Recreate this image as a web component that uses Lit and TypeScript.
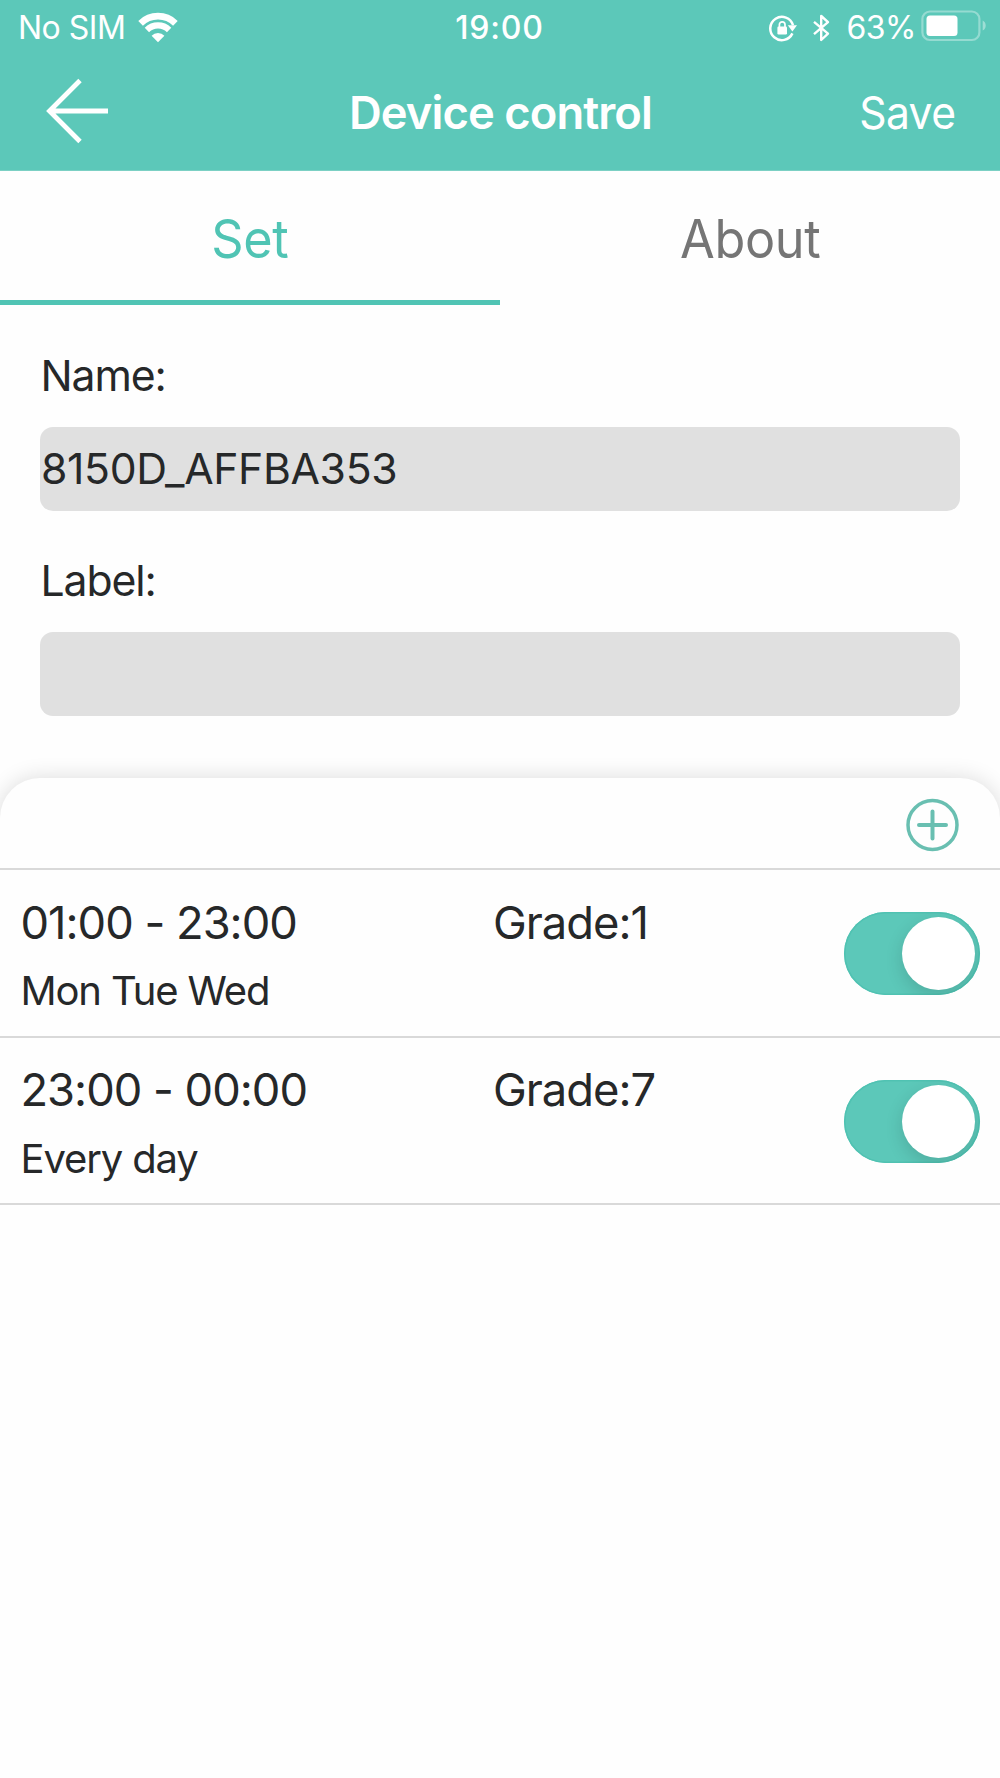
import { LitElement, html, css } from "lit";
import { customElement, property, state } from "lit/decorators.js";
import { classMap } from "lit/directives/class-map.js";

interface Schedule {
  time: string;
  days: string;
  grade: number;
  on: boolean;
}

@customElement("status-bar")
export class StatusBar extends LitElement {
  static styles = css`
    :host {
      display: grid;
      grid-template-columns: 1fr auto 1fr;
      align-items: center;
      height: 55px;
      padding: 0 14px 0 18px;
      font-size: 32px;
      line-height: 55px;
      color: #fff;
    }
    svg {
      display: block;
    }
    .carrier,
    .right {
      display: flex;
      align-items: center;
      font-weight: 400;
    }
    .carrier {
      letter-spacing: -0.5px;
      gap: 12px;
    }
    .clock {
      font-weight: 500;
      letter-spacing: 0.8px;
      margin-left: -5px;
    }
    .right {
      justify-content: flex-end;
    }
    .percent {
      letter-spacing: -0.5px;
      margin-left: 16px;
    }
    .battery {
      margin: 0 0 3px 5px;
    }
    .lock {
      margin-right: 16px;
    }
  `;

  render() {
    return html`
      <div class="carrier">
        <span>No SIM</span>
        <svg width="42" height="31" viewBox="0 0 42 31" fill="none" stroke="#fff">
          <path d="M3.6 11.3a24.8 24.8 0 0 1 34.8 0" stroke-width="6.6" />
          <path d="M9.9 18a15.8 15.8 0 0 1 22.2 0" stroke-width="6.2" />
          <path d="M14.6 23.8a8.8 8.8 0 0 1 12.8 0L21 30.3z" fill="#fff" stroke="none" />
        </svg>
      </div>
      <div class="clock">19:00</div>
      <div class="right">
        <svg class="lock" width="28" height="28" viewBox="0 0 28 28" fill="none" stroke="#fff">
          <path d="M24 11.2A11.6 11.6 0 1 0 23.4 19.4" stroke-width="2.5" />
          <path d="M18.8 11.2h9.2l-4.6 6.4z" fill="#fff" stroke="none" />
          <rect x="8.4" y="12.6" width="9.6" height="7.8" rx="1.2" fill="#fff" stroke="none" />
          <path d="M10.4 13v-2.4a2.8 2.8 0 0 1 5.6 0V13" stroke-width="1.7" />
        </svg>
        <svg width="17" height="28" viewBox="0 0 17 28" fill="none" stroke="#fff" stroke-width="2.4">
          <path d="M1 7.8l14 11.8L8.2 26V2L15 8.2 1 20.2" stroke-linejoin="round" />
        </svg>
        <span class="percent">63%</span>
        <svg class="battery" width="65" height="32" viewBox="0 0 65 32">
          <rect x="1.4" y="1.5" width="57" height="28.5" rx="7.5" fill="none" stroke="#fff" stroke-opacity=".35" stroke-width="2.2" />
          <rect x="5.5" y="5.5" width="31" height="20.5" rx="3.5" fill="#fff" />
          <path d="M61.7 10.5q3 1.5 3 5t-3 5z" fill="#fff" fill-opacity=".4" />
        </svg>
      </div>
    `;
  }
}

@customElement("toggle-switch")
export class ToggleSwitch extends LitElement {
  @property({ type: Boolean }) on = false;

  static styles = css`
    :host {
      display: block;
    }
    .track {
      display: flex;
      box-sizing: border-box;
      width: 136px;
      height: 83px;
      padding: 5px;
      border-radius: 42px;
      background: #d8d8d8;
      overflow: hidden;
    }
    .track.on {
      justify-content: flex-end;
      background: #5cc8b9;
      box-shadow: inset 0 0 0 1.5px #50c2b2;
    }
    .knob {
      width: 73px;
      height: 73px;
      border-radius: 50%;
      background: #fff;
      box-shadow: 0 6px 18px rgba(0, 0, 0, 0.14);
    }
  `;

  render() {
    return html`<div class=${classMap({ track: true, on: this.on })}><div class="knob"></div></div>`;
  }
}

@customElement("app-root")
export class AppRoot extends LitElement {
  @state() private schedules: Schedule[] = [
    { time: "01:00 - 23:00", days: "Mon Tue Wed", grade: 1, on: true },
    { time: "23:00 - 00:00", days: "Every day", grade: 7, on: true },
  ];

  static styles = css`
    :host {
      display: flex;
      flex-direction: column;
      height: 1778px;
      overflow: hidden;
      background: #fefefe;
      color: #262829;
      font-family: Inter, "Liberation Sans", sans-serif;
    }
    svg {
      display: block;
    }
    .header {
      height: 170px;
      background: #5cc8b9;
      color: #fff;
      border-bottom: 1px solid #7cd0c4;
    }
    .nav {
      display: grid;
      grid-template-columns: 1fr auto 1fr;
      align-items: center;
      height: 115px;
      padding: 0 45px 0 46px;
      font-size: 45.3px;
      line-height: 113px;
    }
    .back {
      margin-bottom: 4px;
    }
    .title {
      font-weight: 600;
      letter-spacing: -0.92px;
    }
    .save {
      justify-self: end;
      letter-spacing: -0.6px;
      transform: scaleX(0.94);
      transform-origin: right;
    }
    .tabs {
      display: grid;
      grid-template-columns: 1fr 1fr;
      height: 134px;
    }
    .tab {
      box-sizing: border-box;
      padding-top: 6px;
      border-bottom: 5px solid transparent;
      text-align: center;
      font-size: 53.3px;
      line-height: 123px;
      letter-spacing: -0.4px;
      color: #757575;
    }
    .tab.active {
      color: #50c4b4;
      border-bottom-color: #50c4b4;
    }
    .tab span {
      display: inline-block;
      transform: scaleX(0.945);
    }
    .form {
      display: flex;
      flex-direction: column;
      gap: 45px;
      padding: 46px 40px 62px;
      font-size: 42.7px;
    }
    .label {
      padding-left: 0.5px;
      line-height: 50px;
      margin-bottom: 26px;
      letter-spacing: -1.1px;
    }
    .field {
      box-sizing: border-box;
      height: 84px;
      padding-left: 1px;
      line-height: 84px;
      border-radius: 13px;
      background: #e0e0e0;
      letter-spacing: -0.35px;
    }
    .sheet {
      flex: 1;
      border-radius: 40px 40px 0 0;
      background: #fefefe;
      box-shadow: 0 0 22px rgba(0, 0, 0, 0.14);
    }
    .toolbar {
      display: flex;
      justify-content: flex-end;
      align-items: center;
      box-sizing: border-box;
      height: 92px;
      padding: 4px 41px 0 0;
      border-bottom: 2px solid #d9d9d9;
    }
    .row {
      display: grid;
      grid-template-columns: 472.5px 1fr auto;
      box-sizing: border-box;
      height: 167.5px;
      padding: 0 20px 0 20.5px;
      border-bottom: 2px solid #d9d9d9;
    }
    .info,
    .grade {
      padding-top: 22.5px;
    }
    .time,
    .grade {
      font-size: 45.3px;
      line-height: 60px;
      letter-spacing: -1px;
      white-space: nowrap;
    }
    .days {
      padding-top: 8.5px;
      font-size: 40px;
      line-height: 60px;
      letter-spacing: -1.13px;
    }
    toggle-switch {
      align-self: center;
      margin-top: 2px;
    }
  `;

  render() {
    return html`
      <div class="header">
        <status-bar></status-bar>
        <div class="nav">
          <svg class="back" width="63" height="66" viewBox="0 0 63 66" fill="none" stroke="#fff" stroke-width="4.8">
            <path d="M62 33H3M34 2.5L3.5 33 34 63.5" />
          </svg>
          <div class="title">Device control</div>
          <div class="save">Save</div>
        </div>
      </div>
      <div class="tabs">
        <div class="tab active"><span>Set</span></div>
        <div class="tab"><span>About</span></div>
      </div>
      <div class="form">
        <div>
          <div class="label">Name:</div>
          <div class="field">8150D_AFFBA353</div>
        </div>
        <div>
          <div class="label">Label:</div>
          <div class="field"></div>
        </div>
      </div>
      <div class="sheet">
        <div class="toolbar">
          <svg width="54" height="54" viewBox="0 0 54 54" fill="none" stroke="#69bfb1" stroke-width="3.5">
            <circle cx="27.5" cy="27" r="24.5" />
            <path d="M27.5 13.5v27M14 27h27" stroke-width="4" stroke-linecap="round" />
          </svg>
        </div>
        ${this.schedules.map(
          (s) => html`
            <div class="row">
              <div class="info">
                <div class="time">${s.time}</div>
                <div class="days">${s.days}</div>
              </div>
              <div class="grade">Grade:${s.grade}</div>
              <toggle-switch ?on=${s.on}></toggle-switch>
            </div>
          `,
        )}
      </div>
    `;
  }
}
